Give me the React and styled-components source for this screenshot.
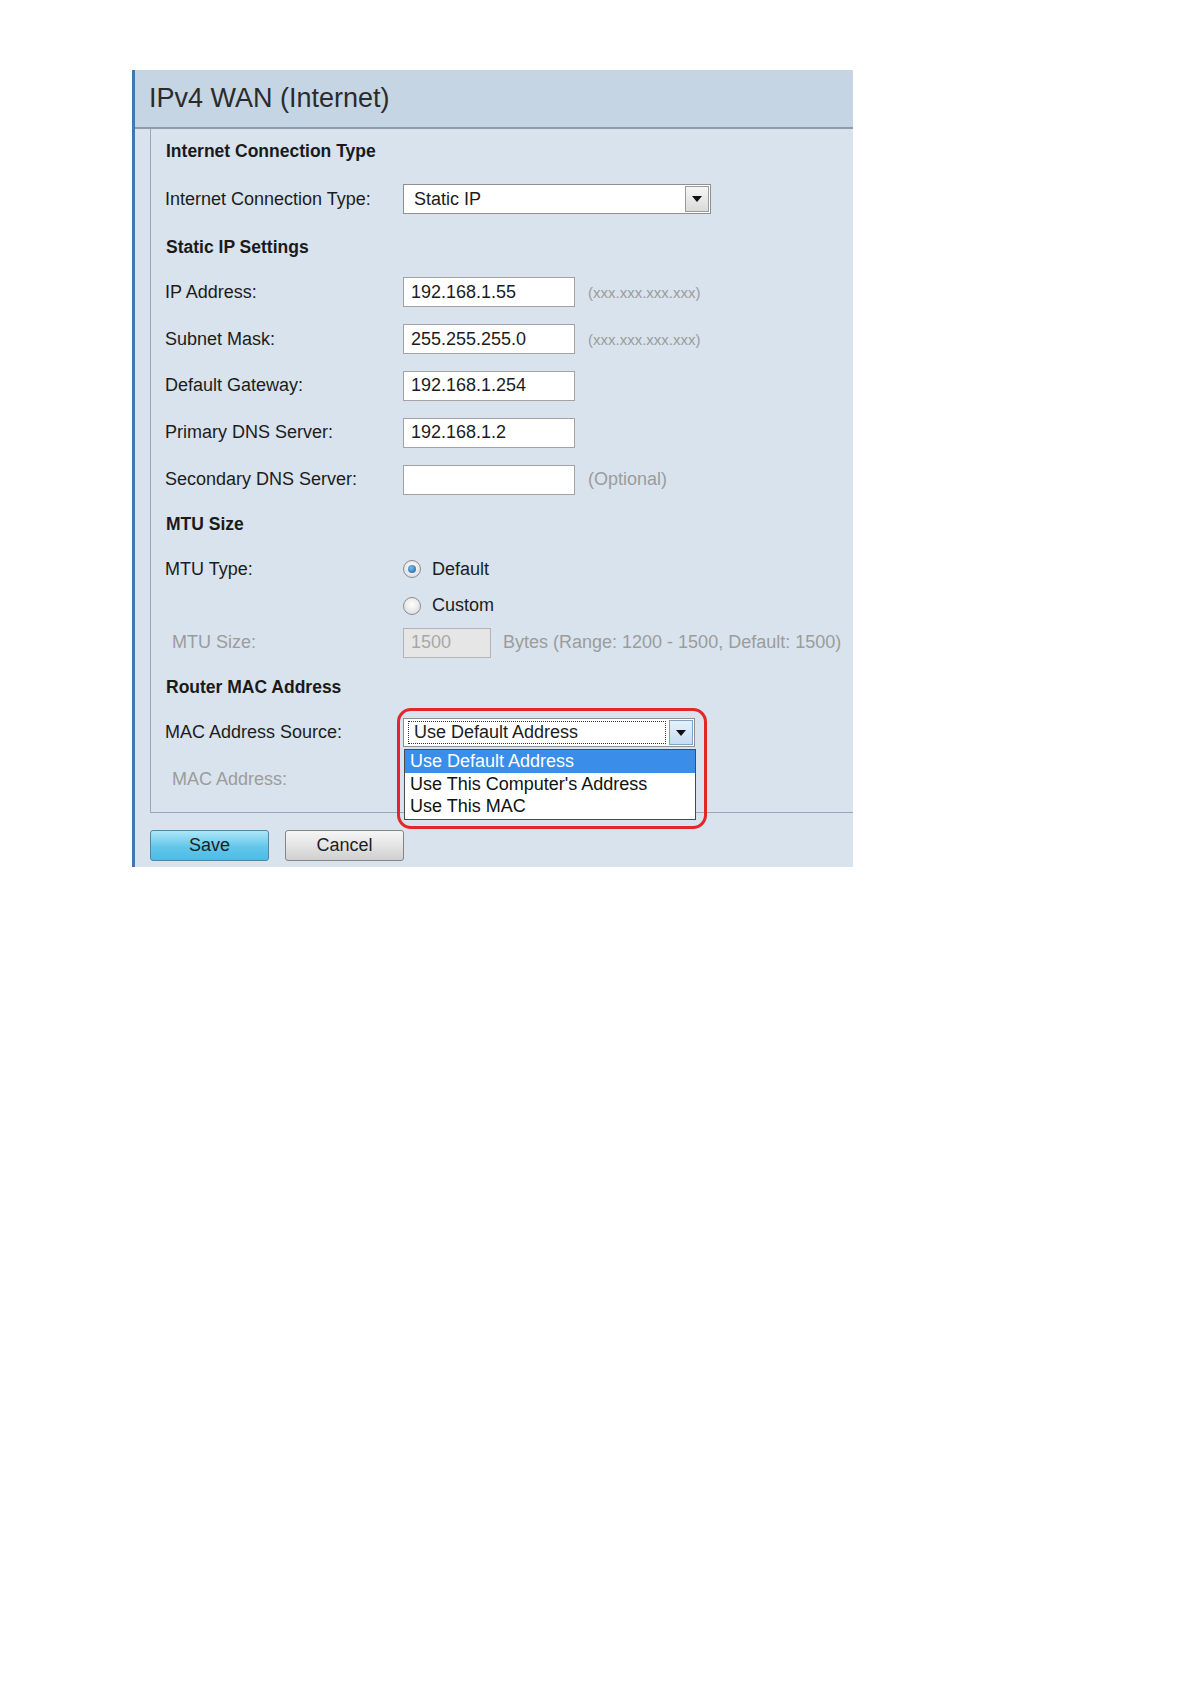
import React from 'react'
import styled, { createGlobalStyle } from 'styled-components'

const GlobalStyle = createGlobalStyle`
  body {
    margin: 0;
    background: #fff;
    font-family: "Liberation Sans", Arial, sans-serif;
    color: #1c1c1c;
  }
`

const Page = styled.div`
  padding: 70px 0 0 132px;
`

const Panel = styled.div`
  width: 721px;
  box-sizing: border-box;
  border-left: 3px solid #3f78b4;
  background: #d8e3ed;
  overflow: hidden;
  padding-bottom: 6px;
`

const Header = styled.div`
  height: 57px;
  background: #c5d5e4;
  border-bottom: 2px solid #8e9cab;
  display: flex;
  align-items: center;
  padding-left: 14px;
`

const Title = styled.h1`
  margin: 0;
  font-size: 27px;
  font-weight: normal;
  color: #2b2b2b;
`

const Body = styled.div`
  padding-left: 15px;
`

const Box = styled.div`
  width: 760px;
  box-sizing: border-box;
  border: 1px solid #9aa8b6;
  border-top: none;
  padding: 0 0 8px 14px;
`

const Heading = styled.div`
  height: ${p => p.h}px;
  display: flex;
  align-items: center;
  font-size: 17.5px;
  font-weight: bold;
  color: #1a1a1a;
  padding-left: 1px;
`

const Row = styled.div`
  height: ${p => p.h}px;
  display: grid;
  grid-template-columns: 238px 1fr;
  align-items: center;
`

const Label = styled.div`
  font-size: 18px;
  color: ${p => (p.muted ? '#9c9c9c' : '#1c1c1c')};
  padding-left: ${p => (p.muted ? 7 : 0)}px;
`

const Control = styled.div`
  display: flex;
  align-items: center;
`

const TextInput = styled.div`
  width: ${p => p.w || 172}px;
  height: 30px;
  box-sizing: border-box;
  border: 1px solid ${p => (p.disabled ? '#b4b4b4' : '#a3a3a3')};
  background: ${p => (p.disabled ? '#e6e6e6' : '#fff')};
  color: ${p => (p.disabled ? '#a8a8a8' : '#1c1c1c')};
  font-size: 18px;
  display: flex;
  align-items: center;
  padding-left: 7px;
`

const Hint = styled.span`
  margin-left: ${p => p.gap || 13}px;
  font-size: ${p => p.size || 18}px;
  color: #9c9c9c;
`

const Select = styled.div`
  width: ${p => p.w}px;
  height: ${p => p.h}px;
  box-sizing: border-box;
  border: 1px solid #8f8f8f;
  background: #fff;
  display: flex;
  align-items: stretch;
  font-size: 18px;
`

const SelectText = styled.div`
  flex: 1;
  display: flex;
  align-items: center;
  padding-left: ${p => (p.focused ? 5 : 10)}px;
  margin: ${p => (p.focused ? '2px 2px 2px 4px' : '0')};
  border: ${p => (p.focused ? '1px dotted #333' : 'none')};
`

const ArrowButton = styled.div`
  width: 24px;
  box-sizing: border-box;
  margin: 1px;
  border: 1px solid ${p => (p.active ? '#7da2c4' : '#9a9a9a')};
  background: ${p =>
    p.active
      ? 'linear-gradient(#e6f1fb, #c6ddf2)'
      : 'linear-gradient(#f6f6f6, #dadada)'};
  display: flex;
  align-items: center;
  justify-content: center;
`

const Triangle = styled.span`
  width: 0;
  height: 0;
  border-left: 5px solid transparent;
  border-right: 5px solid transparent;
  border-top: 6px solid #111;
`

const Radio = styled.span`
  width: 18px;
  height: 18px;
  box-sizing: border-box;
  border-radius: 50%;
  border: 1px solid #8d8d8d;
  background: radial-gradient(circle at 50% 40%, #ffffff, #d6d6d6);
  display: inline-flex;
  align-items: center;
  justify-content: center;
  margin-right: 11px;

  &::after {
    content: '';
    width: 8px;
    height: 8px;
    border-radius: 50%;
    background: radial-gradient(circle at 40% 35%, #78bdf0, #175c9c);
    display: ${p => (p.checked ? 'block' : 'none')};
  }
`

const RadioText = styled.span`
  font-size: 18px;
  color: #1c1c1c;
`

const MacWrap = styled.div`
  position: relative;
  width: 292px;
`

const Menu = styled.div`
  position: absolute;
  left: 1px;
  top: 31px;
  width: 292px;
  box-sizing: border-box;
  border: 1px solid #4a4a4a;
  background: #fff;
  padding: 0 0 1px;
  z-index: 2;
`

const MenuItem = styled.div`
  height: 22.5px;
  display: flex;
  align-items: center;
  padding-left: 5px;
  font-size: 18px;
  background: ${p => (p.selected ? '#3a8eea' : 'transparent')};
  color: ${p => (p.selected ? '#fff' : '#111')};
`

const Ring = styled.div`
  position: absolute;
  left: -6px;
  top: -10px;
  width: 310px;
  height: 121px;
  box-sizing: border-box;
  border: 3px solid #e3262a;
  border-radius: 14px;
  z-index: 3;
  pointer-events: none;
`

const Buttons = styled.div`
  display: flex;
  gap: 16px;
  margin-top: 17px;
`

const Button = styled.button`
  width: 119px;
  height: 31px;
  border-radius: 3px;
  font-family: inherit;
  font-size: 18px;
  color: #1e1e1e;
  border: 1px solid ${p => (p.primary ? '#4f87a8' : '#858585')};
  background: ${p =>
    p.primary
      ? 'linear-gradient(#aee6f8, #63c6ea 55%, #4bbce6)'
      : 'linear-gradient(#f6f6f6, #e2e2e2 55%, #cfcfcf)'};
  padding: 0;
`

const ipRows = [
  { label: 'IP Address:', value: '192.168.1.55', hint: '(xxx.xxx.xxx.xxx)' },
  { label: 'Subnet Mask:', value: '255.255.255.0', hint: '(xxx.xxx.xxx.xxx)' },
  { label: 'Default Gateway:', value: '192.168.1.254' },
  { label: 'Primary DNS Server:', value: '192.168.1.2' },
  { label: 'Secondary DNS Server:', value: '', hint: '(Optional)', plain: true },
]

export default function App() {
  return (
    <Page>
      <GlobalStyle />
      <Panel>
        <Header>
          <Title>IPv4 WAN (Internet)</Title>
        </Header>
        <Body>
          <Box>
            <Heading h={44}>Internet Connection Type</Heading>
            <Row h={52}>
              <Label>Internet Connection Type:</Label>
              <Control>
                <Select w={308} h={30}>
                  <SelectText>Static IP</SelectText>
                  <ArrowButton><Triangle /></ArrowButton>
                </Select>
              </Control>
            </Row>

            <Heading h={44}>Static IP Settings</Heading>
            {ipRows.map(r => (
              <Row h={46.8} key={r.label}>
                <Label>{r.label}</Label>
                <Control>
                  <TextInput>{r.value}</TextInput>
                  {r.hint && <Hint size={r.plain ? 18 : 15}>{r.hint}</Hint>}
                </Control>
              </Row>
            ))}

            <Heading h={44}>MTU Size</Heading>
            <Row h={45}>
              <Label>MTU Type:</Label>
              <Control>
                <Radio checked />
                <RadioText>Default</RadioText>
              </Control>
            </Row>
            <Row h={28}>
              <span />
              <Control>
                <Radio />
                <RadioText>Custom</RadioText>
              </Control>
            </Row>
            <Row h={46}>
              <Label muted>MTU Size:</Label>
              <Control>
                <TextInput w={88} disabled>1500</TextInput>
                <Hint gap={12}>Bytes (Range: 1200 - 1500, Default: 1500)</Hint>
              </Control>
            </Row>

            <Heading h={44}>Router MAC Address</Heading>
            <Row h={46}>
              <Label>MAC Address Source:</Label>
              <Control>
                <MacWrap>
                  <Select w={292} h={29}>
                    <SelectText focused>Use Default Address</SelectText>
                    <ArrowButton active><Triangle /></ArrowButton>
                  </Select>
                  <Menu>
                    <MenuItem selected>Use Default Address</MenuItem>
                    <MenuItem>Use This Computer's Address</MenuItem>
                    <MenuItem>Use This MAC</MenuItem>
                  </Menu>
                  <Ring />
                </MacWrap>
              </Control>
            </Row>
            <Row h={48}>
              <Label muted>MAC Address:</Label>
              <span />
            </Row>
          </Box>
          <Buttons>
            <Button primary>Save</Button>
            <Button>Cancel</Button>
          </Buttons>
        </Body>
      </Panel>
    </Page>
  )
}
